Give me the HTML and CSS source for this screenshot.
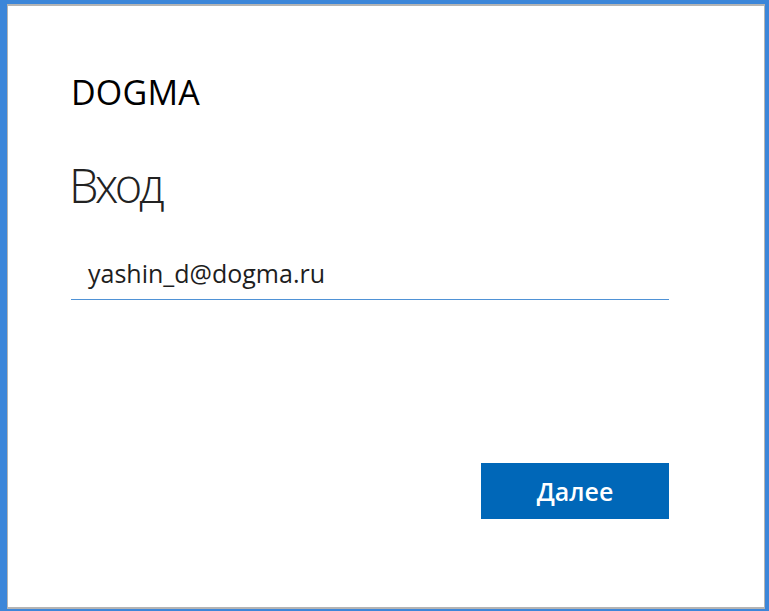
FILE: index.html
```html
<!DOCTYPE html>
<html lang="ru">
<head>
<meta charset="utf-8">
<title>DOGMA — Вход</title>
<link rel="stylesheet" href="styles.css">
</head>
<body>
<div class="frame">
  <main class="panel">
    <div class="brand">DOGMA</div>
    <h1 class="title">Вход</h1>
    <div class="field">yashin_d@dogma.ru</div>
    <div class="actions">
      <button class="next" type="button">Далее</button>
    </div>
  </main>
</div>
</body>
</html>
```

FILE: styles.css
```css
html, body {
  margin: 0;
  padding: 0;
  height: 100%;
}
body {
  background: #3c86d9;
  font-family: "Open Sans", "Noto Sans", sans-serif;
}
.frame {
  box-sizing: border-box;
  height: 611px;
  padding: 4px 4px 2px 7px;
}
.panel {
  box-sizing: border-box;
  height: 100%;
  background: #ffffff;
  border: 1px solid #b4b4b4;
  border-top-width: 2px;
  border-bottom-width: 2px;
  padding: 66px 95px 0 63px;
  display: flex;
  flex-direction: column;
}
.brand {
  font-size: 34px;
  line-height: 40px;
  color: #000;
  letter-spacing: 0.2px;
}
.title {
  margin: 45px 0 0 -2px;
  font-size: 47px;
  font-weight: 300;
  line-height: 56px;
  color: #222;
  letter-spacing: -3.5px;
}
.field {
  margin-top: 40px;
  padding: 0 0 6px 17px;
  font-size: 25px;
  line-height: 40px;
  color: #1e1e1e;
  border-bottom: 1px solid #4f92d6;
}
.actions {
  display: flex;
  justify-content: flex-end;
  margin-top: 163px;
}
.next {
  width: 188px;
  height: 56px;
  border: 0;
  background: #0067b8;
  color: #fff;
  font-family: "Open Sans", "Noto Sans", sans-serif;
  font-size: 25px;
  font-weight: 600;
  padding: 0;
}
```
